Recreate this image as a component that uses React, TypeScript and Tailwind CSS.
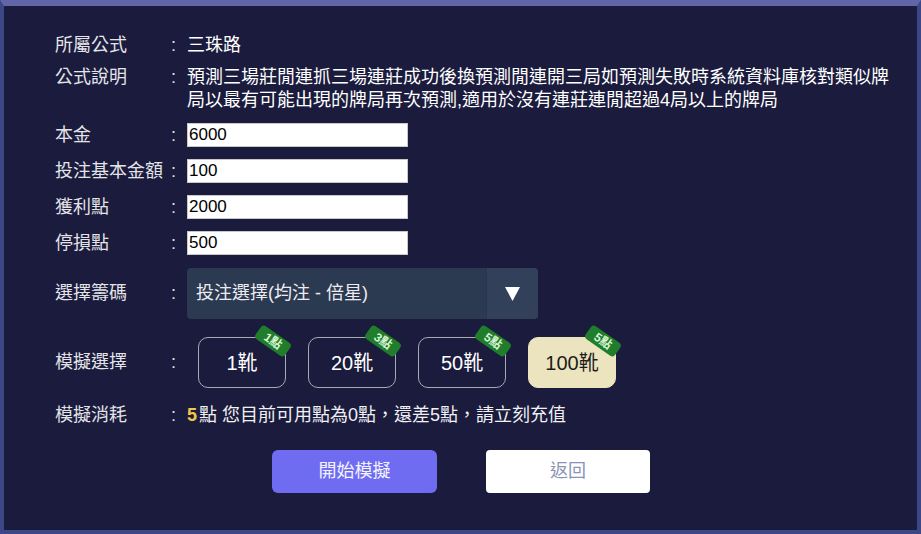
import type { ReactNode } from 'react';

const FONT = 'font-["Liberation_Sans","Noto_Sans_CJK_TC",sans-serif]';

type Plan = { shoe: string; cost: number; active?: boolean };

const PLANS: Plan[] = [
  { shoe: '1', cost: 1 },
  { shoe: '20', cost: 3 },
  { shoe: '50', cost: 5 },
  { shoe: '100', cost: 5, active: true },
];

function Row({ label, children, top = false, className = '' }: { label: string; children: ReactNode; top?: boolean; className?: string }) {
  return (
    <div className={`flex ${top ? 'items-start' : 'items-center'} ${className}`}>
      <div className="w-[116px] shrink-0 text-[#e4e4e8] leading-[23px]">{label}</div>
      <div className="w-[16px] shrink-0 text-[#e4e4e8] leading-[23px]">:</div>
      {children}
    </div>
  );
}

function Field({ value }: { value: string }) {
  return (
    <input
      readOnly
      value={value}
      className={`w-[221px] h-[24px] bg-white border border-[#c9c9c9] px-[1px] text-[17px] text-black outline-none ${FONT}`}
    />
  );
}

function PlanButton({ plan }: { plan: Plan }) {
  return (
    <button
      className={`relative w-[88px] h-[51px] rounded-[10px] border text-[20px] ${
        plan.active ? 'bg-[#ece4bf] border-[#ece4bf] text-[#1c1c1c]' : 'border-[#a9a9b4] text-white'
      }`}
    >
      {plan.shoe}靴
      <span className="absolute right-[-6px] top-[-5px] w-[36px] h-[16px] rounded-[4px] bg-[#1f7d2c] rotate-[35deg] flex items-center justify-center text-[12px] font-bold text-[#d9f5d2] leading-none">
        {plan.cost}點
      </span>
    </button>
  );
}

export default function App() {
  return (
    <div className={`w-[921px] h-[534px] bg-[#1a1b3d] border-t-[6px] border-t-[#6266a8] border-x-4 border-x-[#3c4787] border-b-4 border-b-[#3c4787] ${FONT} text-[18px] text-white`}>
      <div className="pl-[51px] pt-[28px] flex flex-col">
        <Row label="所屬公式">
          <span className="leading-[23px]">三珠路</span>
        </Row>

        <Row label="公式說明" top className="mt-[9px]">
          <p className="w-[706px] leading-[23px]">
            預測三場莊閒連抓三場連莊成功後換預測閒連開三局如預測失敗時系統資料庫核對類似牌局以最有可能出現的牌局再次預測,適用於沒有連莊連閒超過4局以上的牌局
          </p>
        </Row>

        <div className="mt-[11px] flex flex-col gap-[12px]">
          <Row label="本金">
            <Field value="6000" />
          </Row>
          <Row label="投注基本金額">
            <Field value="100" />
          </Row>
          <Row label="獲利點">
            <Field value="2000" />
          </Row>
          <Row label="停損點">
            <Field value="500" />
          </Row>
        </div>

        <Row label="選擇籌碼" className="mt-[13px]">
          <div className="w-[351px] h-[51px] rounded-[4px] bg-[#2b3951] flex overflow-hidden">
            <div className="flex-1 flex items-center pl-[9px] text-[#ececf0]">投注選擇(均注 - 倍星)</div>
            <div className="w-[52px] bg-[#32405a] border-l border-[#2a364d] flex items-center justify-center">
              <svg width="15" height="14" viewBox="0 0 15 14">
                <polygon points="0,0 15,0 7.5,14" fill="#ffffff" />
              </svg>
            </div>
          </div>
        </Row>

        <Row label="模擬選擇" className="mt-[18px]">
          <div className="flex gap-[22px] pl-[11px]">
            {PLANS.map((p) => (
              <PlanButton key={p.shoe} plan={p} />
            ))}
          </div>
        </Row>

        <Row label="模擬消耗" className="mt-[16px]">
          <span className="leading-[23px] text-[#f1f1f4]">
            <b className="text-[#f0c64c] mr-[2px]">5</b>點 您目前可用點為0點，還差5點，請立刻充值
          </span>
        </Row>

        <div className="mt-[23px] flex gap-[49px] pl-[217px]">
          <button className="w-[165px] h-[43px] rounded-[6px] bg-[#6f6cf1] text-[#f4f4ff]">開始模擬</button>
          <button className="w-[164px] h-[43px] rounded-[4px] bg-white text-[#8a93b6]">返回</button>
        </div>
      </div>
    </div>
  );
}
